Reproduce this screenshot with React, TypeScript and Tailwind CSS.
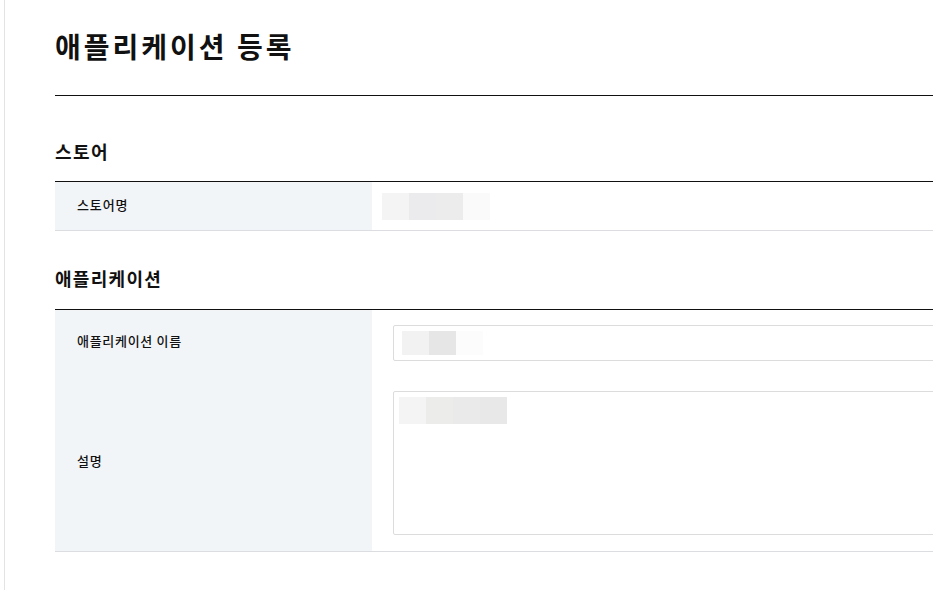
import React from "react";

const font = { fontFamily: '"Noto Sans CJK KR", "Noto Sans", sans-serif' };

function Blur({ colors, h }: { colors: string[]; h: string }) {
  return (
    <div className={`flex ${h}`}>
      {colors.map((c, i) => (
        <div key={i} className="w-[27px] h-full" style={{ background: c }} />
      ))}
    </div>
  );
}

export default function App() {
  return (
    <div className="w-[933px] h-[590px] overflow-hidden bg-white text-[#111]" style={font}>
      <div className="ml-[4px] h-full border-l border-[#e3e3e3] pl-[50px]">
        <div className="w-[1000px]">
          <div className="pt-[26px] pb-[29px] border-b border-[#111]">
            <h1 className="text-[28px] leading-[40px] font-bold tracking-[3px]">애플리케이션 등록</h1>
          </div>

          <h2 className="mt-[42px] text-[18px] leading-[26px] font-bold tracking-[1.4px]">스토어</h2>
          <div className="mt-[17px] border-t border-[#111]">
            <div className="flex h-[49px] border-b border-[#dcdde0]">
              <div className="w-[317px] bg-[#f2f5f8] flex items-center pl-[22px] pb-[3px] text-[13px] font-medium tracking-[0.9px]">스토어명</div>
              <div className="flex items-center pl-[10px]">
                <Blur h="h-[27px]" colors={["#f4f4f4", "#ebebed", "#ececec", "#fafafa"]} />
              </div>
            </div>
          </div>

          <h2 className="mt-[34px] text-[18px] leading-[26px] font-bold tracking-[1.3px]">애플리케이션</h2>
          <div className="mt-[18px] border-t border-[#111] border-b border-b-[#dcdde0]">
            <div className="flex h-[66px]">
              <div className="w-[317px] bg-[#f2f5f8] flex items-center pl-[22px] pb-[4px] text-[13px] font-medium tracking-[0.7px]">애플리케이션 이름</div>
              <div className="flex-1 pl-[21px] pt-[15px]">
                <div className="h-[36px] border border-[#dcdcdc] rounded-[2px] flex items-center pl-[8px]">
                  <Blur h="h-[24px]" colors={["#f2f2f2", "#e6e6e6", "#fcfcfc"]} />
                </div>
              </div>
            </div>
            <div className="flex h-[175px]">
              <div className="w-[317px] bg-[#f2f5f8] flex items-center pl-[22px] pb-[5px] text-[13px] font-medium tracking-[0.9px]">설명</div>
              <div className="flex-1 pl-[21px] pt-[15px]">
                <div className="h-[144px] border border-[#dcdcdc] rounded-[2px] pl-[5px] pt-[5px]">
                  <Blur h="h-[27px]" colors={["#f3f4f3", "#ececeb", "#eaeaea", "#e8e8e8"]} />
                </div>
              </div>
            </div>
          </div>
        </div>
      </div>
    </div>
  );
}
